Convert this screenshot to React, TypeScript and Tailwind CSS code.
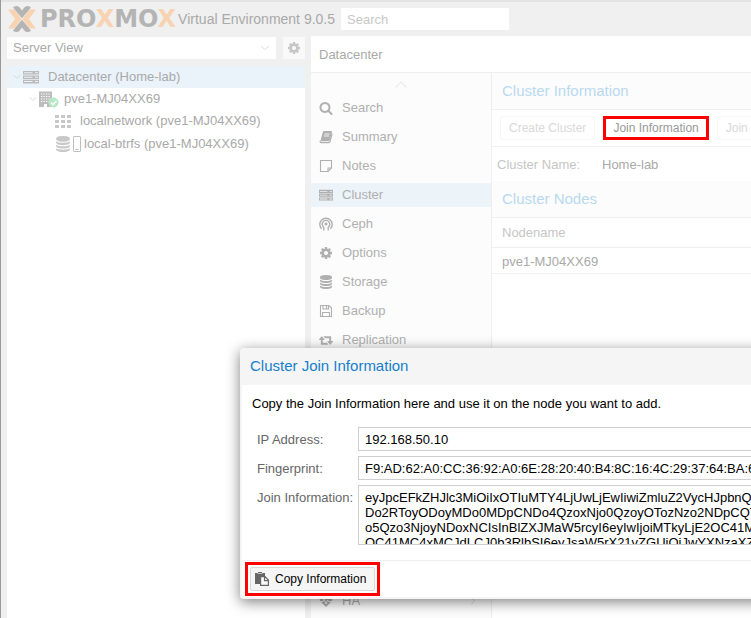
import React from "react";
import { ChevronDown, ChevronUp, ChevronRight } from "lucide-react";

type IconProps = { className?: string };

const SearchIcon = ({ className }: IconProps) => (
  <svg viewBox="0 0 1792 1792" className={className} fill="currentColor">
    <path d="M1216 832q0-185-131.500-316.500t-316.500-131.500-316.500 131.500-131.500 316.500 131.500 316.500 316.500 131.500 316.500-131.500 131.500-316.500zm512 832q0 52-38 90t-90 38q-54 0-90-38l-343-342q-179 124-399 124-143 0-273.500-55.500t-225-150-150-225-55.500-273.500 55.500-273.500 150-225 225-150 273.500-55.500 273.500 55.500 225 150 150 225 55.500 273.500q0 220-124 399l343 343q37 37 37 90z" />
  </svg>
);

const DatabaseIcon = ({ className }: IconProps) => (
  <svg viewBox="0 0 1792 1792" className={className} fill="currentColor">
    <path d="M896 768q237 0 443-43t325-127v170q0 69-103 128t-280 93.500-385 34.500-385-34.500-280-93.500-103-128v-170q119 84 325 127t443 43zm0 768q237 0 443-43t325-127v170q0 69-103 128t-280 93.500-385 34.500-385-34.500-280-93.500-103-128v-170q119 84 325 127t443 43zm0-384q237 0 443-43t325-127v170q0 69-103 128t-280 93.500-385 34.500-385-34.500-280-93.500-103-128v-170q119 84 325 127t443 43zm0-1152q208 0 385 34.500t280 93.500 103 128v128q0 69-103 128t-280 93.500-385 34.500-385-34.500-280-93.500-103-128v-128q0-69 103-128t280-93.500 385-34.500z" />
  </svg>
);

const GearIcon = ({ className }: IconProps) => (
  <svg viewBox="0 0 1792 1792" className={className} fill="currentColor">
    <path d="M1152 896q0-106-75-181t-181-75-181 75-75 181 75 181 181 75 181-75 75-181zm512-109v222q0 12-8 23t-20 13l-185 28q-19 54-39 91 35 50 107 138 10 12 10 25t-9 23q-27 37-99 108t-94 71q-12 0-26-9l-138-108q-44 23-91 38-16 136-29 186-7 28-36 28h-222q-14 0-24.500-8.500t-11.500-21.500l-28-184q-49-16-90-37l-141 107q-10 9-25 9-14 0-25-11-126-114-165-168-7-10-7-23 0-12 8-23 15-21 51-66.500t54-70.500q-27-50-41-99l-183-27q-13-2-21-12.500t-8-23.500v-222q0-12 8-23t19-13l186-28q14-46 39-92-40-57-107-138-10-12-10-24 0-10 9-23 26-36 98.500-107.500t94.500-71.500q13 0 26 10l138 107q44-23 91-38 16-136 29-186 7-28 36-28h222q14 0 24.500 8.500t11.500 21.500l28 184q49 16 90 37l142-107q9-9 24-9 13 0 25 10 129 119 165 170 7 8 7 22 0 12-8 23-15 21-51 66.500t-54 70.500q26 50 41 98l183 28q13 2 21 12.500t8 23.500z" />
  </svg>
);

const RetweetIcon = ({ className }: IconProps) => (
  <svg viewBox="0 0 1920 1792" className={className} fill="currentColor">
    <path d="M1280 1504q0 13-9.500 22.500t-22.500 9.500h-960q-8 0-13.500-2t-9-7-5.500-8-3-11.500-1-11.500v-600h-192q-26 0-45-19t-19-45q0-24 15-41l320-384q19-22 49-22t49 22l320 384q15 17 15 41 0 26-19 45t-45 19h-192v384h576q16 0 25 11l160 192q7 10 7 21zm640-416q0 24-15 41l-320 384q-20 23-49 23t-49-23l-320-384q-15-17-15-41 0-26 19-45t45-19h192v-384h-576q-16 0-25-12l-160-192q-7-9-7-20 0-13 9.500-22.500t22.500-9.500h960q8 0 13.500 2t9 7 5.500 8 3 11.500 1 11.500v600h192q26 0 45 19t19 45z" />
  </svg>
);

const ServerIcon = ({ className }: IconProps) => (
  <svg viewBox="0 0 16 14" className={className} fill="currentColor" fillRule="evenodd">
    <path d="M0 1h16v3.600H0zM1 2.300h8.500v1H1zM12 2.300h3v1h-3zM0 5.400h16V9H0zM1 6.700h8.500v1H1zM12 6.700h3v1h-3zM0 9.800h16v3.600H0zM1 11.100h8.500v1H1zM12 11.100h3v1h-3z" />
  </svg>
);

const BookIcon = ({ className }: IconProps) => (
  <svg viewBox="0 0 14 14" className={className}>
    <path d="M4.500 1.500h8L10 10.500H2z" fill="currentColor" stroke="currentColor" strokeLinejoin="round" />
    <path d="M5.500 4h5M5 6h5" stroke="#fcfcfc" strokeWidth="0.900" />
    <path d="M13 3.500 11 11.500q-.3 1-1.300 1H2.500q-1.500 0-1.300-1.800" fill="none" stroke="currentColor" strokeWidth="1.300" />
  </svg>
);

const NoteIcon = ({ className }: IconProps) => (
  <svg viewBox="0 0 14 14" className={className} fill="none" stroke="currentColor" strokeWidth="1.100">
    <path d="M1.500 1.500h11v7.500l-3.500 3.500H1.500zM12.500 9H9v3.500" />
  </svg>
);

const CephIcon = ({ className }: IconProps) => (
  <svg viewBox="0 0 14 14" className={className} fill="none" stroke="currentColor" strokeWidth="1.400">
    <path d="M2.500 11.700A6.200 6.200 0 1 1 11.500 11.700M4.800 13.500V10.300A3.800 3.800 0 1 1 9.200 10.300V13.500" />
    <circle cx="7" cy="7" r="1.500" fill="currentColor" stroke="none" />
  </svg>
);

const FloppyIcon = ({ className }: IconProps) => (
  <svg viewBox="0 0 14 14" className={className} fill="none" stroke="currentColor" strokeWidth="1.100">
    <path d="M1.500 1.500h8.500l2.500 2.500v8.500h-11zM4 1.500V5h5.500V1.500M3.500 12.500V8.500h7v4M7.500 2v2.500" />
  </svg>
);

const HeartbeatIcon = ({ className }: IconProps) => (
  <svg viewBox="0 0 14 14" className={className}>
    <path d="M7 13 1.500 7.500C-1 4 3-.5 7 3.500 11-.5 15 4 12.500 7.500z" fill="currentColor" />
    <path d="M0 7.500h4L5 5l2 5 1.500-4 1 1.500H14" fill="none" stroke="#fcfcfc" strokeWidth="0.900" />
  </svg>
);

const NodeIcon = ({ className }: IconProps) => (
  <svg viewBox="0 0 20 17" className={className}>
    <path d="M0 .5h13V16H0z" fill="#bdbdbd" />
    <path d="M2 3h9M2 5.500h9M2 8h9M2 10.500h9" stroke="#fff" strokeWidth="1.100" strokeDasharray="1.300 1.200" />
    <path d="M5 13h3v3H5z" fill="#fff" />
    <circle cx="14.500" cy="11.500" r="5" fill="#b5e9c5" />
    <path d="m12 11.500 2 2 3.500-3.500" fill="none" stroke="#fff" strokeWidth="1.600" />
  </svg>
);

const GridIcon = ({ className }: IconProps) => (
  <svg viewBox="0 0 16 14" className={className} fill="currentColor">
    <path d="M0 1h4v3H0zM6 1h4v3H6zM12 1h4v3h-4zM0 6h4v3H0zM6 6h4v3H6zM12 6h4v3h-4zM0 11h4v3H0zM6 11h4v3H6zM12 11h4v3h-4z" />
  </svg>
);

const DriveIcon = ({ className }: IconProps) => (
  <svg viewBox="0 0 8 16" className={className} fill="none" stroke="currentColor">
    <rect x="0.500" y="0.500" width="7" height="15" rx="0.500" />
    <path d="M2.500 13.500h3" />
  </svg>
);

const PasteIcon = ({ className }: IconProps) => (
  <svg viewBox="0 0 14 14" className={className}>
    <path d="M0 1h3V0h4v1h3v3H5v8H0z" fill="#666" />
    <path d="M2.500 1.500h5" stroke="#ddd" strokeWidth="0.800" />
    <path d="M5.600 4.600h4.400l3.400 3.400v5.400H5.600zM9.500 4.600v4h4" fill="#fff" stroke="#666" strokeWidth="1.200" />
  </svg>
);

const ProxmoxMark = ({ className }: IconProps) => (
  <svg viewBox="0 0 28 26" className={className}>
    <path d="M0 3.500h4.500q2 0 3.200 1.400L13.500 13l-5.800 8.100q-1.200 1.400-3.200 1.400H0L7 13zM28 3.500h-4.500q-2 0-3.200 1.400L14.500 13l5.800 8.100q1.200 1.400 3.200 1.400H28L21 13z" fill="#f7d3b2" />
    <path d="M5 1.500Q6.300 0 8.500 0q2 0 3.200 1.500L14 4.500l2.300-3Q17.500 0 19.500 0 21.700 0 23 1.500L14 12.300zM5 24.500Q6.300 26 8.500 26q2 0 3.200-1.500l2.300-3 2.300 3q1.200 1.500 3.200 1.500 2.200 0 3.500-1.500L14 13.700z" fill="#b4b4b4" />
  </svg>
);

const menuItems = [
  { icon: <SearchIcon className="size-3.5" />, label: "Search" },
  { icon: <BookIcon className="size-3.5" />, label: "Summary" },
  { icon: <NoteIcon className="size-3.5" />, label: "Notes" },
  { icon: <ServerIcon className="size-3.5" />, label: "Cluster", active: true },
  { icon: <CephIcon className="size-3.5" />, label: "Ceph" },
  { icon: <GearIcon className="size-3.5" />, label: "Options" },
  { icon: <DatabaseIcon className="size-3.5" />, label: "Storage" },
  { icon: <FloppyIcon className="size-3.5" />, label: "Backup" },
  { icon: <RetweetIcon className="size-3.5" />, label: "Replication" },
];

const joinInformation = [
  "eyJpcEFkZHJlc3MiOiIxOTIuMTY4LjUwLjEwIiwiZmluZ2VycHJpbnQ",
  "Do2RToyODoyMDo0MDpCNDo4QzoxNjo0QzoyOTozNzo2NDpCQT",
  "o5Qzo3NjoyNDoxNCIsInBlZXJMaW5rcyI6eyIwIjoiMTkyLjE2OC41M",
  "OC41MC4xMCJdLCJ0b3RlbSI6eyJsaW5rX21vZGUiOiJwYXNzaXZ",
].join("\n");

function Header() {
  return (
    <header className="flex h-9 items-center border-t-2 border-[#e2e4e4] pl-[7px]">
      <ProxmoxMark className="mr-1 h-[26px] w-7 shrink-0" />
      <span className="font-['DejaVu_Sans',sans-serif] text-2xl leading-6 font-bold text-[#b4b4b4]">
        PRO<span className="text-[#f7d3b2]">X</span>MO<span className="text-[#f7d3b2]">X</span>
      </span>
      <span className="ml-0.5 text-sm whitespace-nowrap text-[#a9a9a9]">Virtual Environment 9.0.5</span>
      <input
        aria-label="Search"
        placeholder="Search"
        className="ml-1.5 h-[22px] w-[168px] bg-white px-1.5 text-[13px] outline-none placeholder:text-[#c8c8c8]"
      />
    </header>
  );
}

function ResourceTree() {
  return (
    <aside className="flex w-[298px] shrink-0 flex-col gap-[7px] pt-px">
      <div className="flex gap-[7px]">
        <div className="relative flex-1">
          <select
            aria-label="View"
            className="block h-[22px] w-full appearance-none bg-white px-1.5 text-[13px] text-[#aaa] outline-none"
          >
            <option>Server View</option>
          </select>
          <ChevronDown className="pointer-events-none absolute top-1 right-1 size-3.5 text-[#d5d5d5]" strokeWidth={1.5} />
        </div>
        <button aria-label="Settings" className="flex size-[22px] items-center justify-center bg-[#f9f9f9] text-[#c6c6c6]">
          <GearIcon className="size-3.5" />
        </button>
      </div>
      <ul className="flex-1 bg-white text-[13px] text-[#a9a9a9]">
        <li className="flex h-[22px] items-center bg-[#eaf2fa] pl-1">
          <ChevronDown className="size-3 text-[#d0d0d0]" strokeWidth={1.5} />
          <ServerIcon className="mr-[9px] h-3.5 w-4 text-[#bbb]" />
          Datacenter (Home-lab)
        </li>
        <li className="flex h-[22px] items-center pl-5">
          <ChevronDown className="size-3 text-[#d0d0d0]" strokeWidth={1.5} />
          <NodeIcon className="mr-[5px] h-[17px] w-5" />
          pve1-MJ04XX69
        </li>
        <li className="flex h-[22px] items-center pl-12">
          <GridIcon className="mr-[9px] h-3.5 w-4 text-[#c8c8c8]" />
          localnetwork (pve1-MJ04XX69)
        </li>
        <li className="flex h-6 items-center pl-12">
          <DatabaseIcon className="mr-0.5 size-4 text-[#c8c8c8]" />
          <DriveIcon className="mr-[3px] h-4 w-2 text-[#c0c0c0]" />
          local-btrfs (pve1-MJ04XX69)
        </li>
      </ul>
    </aside>
  );
}

function SideMenu() {
  return (
    <nav className="w-[181px] shrink-0 border-r border-[#eee] bg-[#fcfcfc] text-[13px] text-[#b0b0b0]">
      <ChevronUp className="mx-auto h-[23px] w-5 text-[#ececec]" strokeWidth={1.5} />
      <ul className="flex flex-col gap-[5px]">
        {menuItems.map((item) => (
          <li key={item.label} className={item.active ? "bg-[#ecf3f9]" : ""}>
            <a href="#" className="flex h-6 items-center gap-[9px] pl-2">
              <span className="flex w-3.5 justify-center">{item.icon}</span>
              {item.label}
            </a>
          </li>
        ))}
        <li className="mt-[232px]">
          <a href="#" className="flex h-6 items-center gap-[9px] pl-2">
            <HeartbeatIcon className="size-3.5" />
            HA
            <ChevronRight className="mr-3 ml-auto size-3 text-[#ddd]" />
          </a>
        </li>
      </ul>
    </nav>
  );
}

function ClusterPanel() {
  return (
    <section className="min-w-0 flex-1 overflow-hidden bg-white text-[13px]">
      <h2 className="flex h-[37px] items-center border-b border-[#f0f0f0] bg-[#fcfcfc] pl-2.5 text-[15px] text-[#b9d9ef]">
        Cluster Information
      </h2>
      <div className="flex h-[37px] items-center gap-2 border-b border-[#f0f0f0] pl-2 text-xs whitespace-nowrap">
        <button disabled className="h-6 shrink-0 rounded-xs border border-[#f7f7f7] px-2 text-[#d9d9d9]">
          Create Cluster
        </button>
        <button className="h-6 shrink-0 border-3 border-[#f00] px-[7px] text-[#999]">Join Information</button>
        <button disabled className="h-6 shrink-0 rounded-xs border border-[#f7f7f7] px-2 text-[#d9d9d9]">
          Join
        </button>
      </div>
      <div className="flex h-[34px] items-center pt-0.5 pl-[5px]">
        <span className="w-[105px] text-[#c6c6c6]">Cluster Name:</span>
        <span className="text-[#a9a9a9]">Home-lab</span>
      </div>
      <h2 className="flex h-[37px] items-center border-b border-[#f0f0f0] bg-[#fcfcfc] pl-2.5 text-[15px] text-[#b9d9ef]">
        Cluster Nodes
      </h2>
      <table className="w-full border-collapse text-left">
        <thead>
          <tr className="h-[29px] border-b border-[#f0f0f0] text-[#c6c6c6]">
            <th className="pl-2.5 font-normal">Nodename</th>
          </tr>
        </thead>
        <tbody>
          <tr className="h-[26px] border-b border-[#f0f0f0] text-[#a9a9a9]">
            <td className="pt-1 pl-2.5">pve1-MJ04XX69</td>
          </tr>
        </tbody>
      </table>
    </section>
  );
}

function JoinDialog() {
  return (
    <div
      role="dialog"
      aria-labelledby="join-title"
      className="absolute top-[348px] -right-6 left-[239px] rounded-sm border-b-2 border-l-2 border-[#f5f5f5] bg-white text-[13px] text-black shadow-[0_3px_14px_rgba(0,0,0,0.5)]"
    >
      <h1 id="join-title" className="flex h-[37px] items-center bg-[#f5f5f5] pl-2 text-[15px] text-[#157fcc]">
        Cluster Join Information
      </h1>
      <form className="px-2.5 pt-[9px] pb-[15px]">
        <p className="mb-3.5 leading-[19px] whitespace-nowrap">
          Copy the Join Information here and use it on the node you want to add.
        </p>
        <div className="grid grid-cols-[101px_1fr] gap-y-[5px] pl-[5px]">
          <label htmlFor="ip" className="pt-0.5 leading-[22px] text-[#666]">IP Address:</label>
          <input id="ip" readOnly defaultValue="192.168.50.10" className="h-6 border border-[#cfcfcf] px-1.5 outline-none" />
          <label htmlFor="fingerprint" className="pt-0.5 leading-[22px] text-[#666]">Fingerprint:</label>
          <input
            id="fingerprint"
            readOnly
            defaultValue="F9:AD:62:A0:CC:36:92:A0:6E:28:20:40:B4:8C:16:4C:29:37:64:BA:6"
            className="h-6 border border-[#cfcfcf] px-1.5 outline-none"
          />
          <label htmlFor="join" className="pt-0.5 leading-[22px] whitespace-nowrap text-[#666]">Join Information:</label>
          <textarea
            id="join"
            readOnly
            wrap="off"
            defaultValue={joinInformation}
            className="h-[60px] resize-none overflow-hidden border border-[#cfcfcf] px-1.5 pt-1 leading-[15px] outline-none"
          />
        </div>
      </form>
      <footer className="border-t border-[#f0f0f0] py-px pl-[3px]">
        <div className="w-fit border-3 border-[#f00] p-0.5">
          <button className="flex h-6 items-center gap-1.5 rounded-xs border border-[#d8d8d8] bg-[#f5f5f5] px-1 pr-2 text-xs">
            <PasteIcon className="size-3.5" />
            Copy Information
          </button>
        </div>
      </footer>
    </div>
  );
}

export default function App() {
  return (
    <div className="relative flex h-screen flex-col overflow-hidden border-l border-[#999] bg-[#f0f0f0] font-['Liberation_Sans',Arial,sans-serif]">
      <Header />
      <div className="flex min-h-0 flex-1 gap-1.5 pl-1.5">
        <ResourceTree />
        <main className="flex min-w-0 flex-1 flex-col bg-white">
          <h1 className="flex h-[37px] shrink-0 items-center border-b border-[#eee] pt-0.5 pl-2 text-[13px] text-[#a9a9a9]">
            Datacenter
          </h1>
          <div className="flex min-h-0 flex-1">
            <SideMenu />
            <ClusterPanel />
          </div>
        </main>
      </div>
      <JoinDialog />
    </div>
  );
}
